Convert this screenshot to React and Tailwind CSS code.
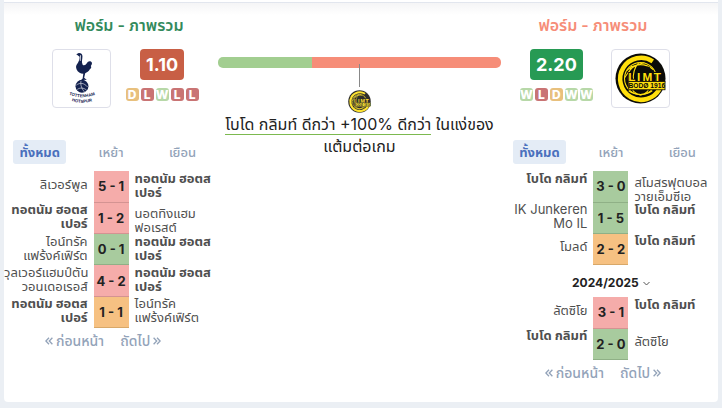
const FORM_COLORS = {
  W: "bg-[#b7d8a8]",
  D: "bg-[#e8c07d]",
  L: "bg-[#c97474]",
};

const SCORE_COLORS = {
  W: "bg-[#a8cb9e] border-[#8fb086]",
  D: "bg-[#f6c182] border-[#d8a869]",
  L: "bg-[#f5acaa] border-[#d49392]",
};

const SPURS = { lines: ["ทอตนัม ฮอตส", "เปอร์"], bold: true };
const GLIMT = { lines: ["โบโด กลิมท์"], bold: true };

const HOME = {
  title: "ฟอร์ม - ภาพรวม",
  points: "1.10",
  form: ["D", "L", "W", "L", "L"],
  matches: [
    [{ lines: ["ลิเวอร์พูล"] }, "5 - 1", "L", SPURS],
    [SPURS, "1 - 2", "L", { lines: ["นอตทิงแฮม", "ฟอเรสต์"], low: true }],
    [{ lines: ["ไอน์ทรัค", "แฟร้งค์เฟิร์ต"] }, "0 - 1", "W", SPURS],
    [{ lines: ["วุลเวอร์แฮมป์ตัน", "วอนเดอเรอส์"] }, "4 - 2", "L", SPURS],
    [SPURS, "1 - 1", "D", { lines: ["ไอน์ทรัค", "แฟร้งค์เฟิร์ต"] }],
  ],
};

const AWAY = {
  title: "ฟอร์ม - ภาพรวม",
  points: "2.20",
  form: ["W", "L", "D", "W", "W"],
  matches: [
    [GLIMT, "3 - 0", "W", { lines: ["สโมสรฟุตบอล", "วายเอ็มซีเอ"], low: true }],
    [{ lines: ["IK Junkeren", "Mo IL"] }, "1 - 5", "W", GLIMT],
    [{ lines: ["โมลด์"] }, "2 - 2", "D", GLIMT],
  ],
  previous: [
    [{ lines: ["ลัตซิโย"] }, "3 - 1", "L", GLIMT],
    [GLIMT, "2 - 0", "W", { lines: ["ลัตซิโย"] }],
  ],
};

function SpursLogo() {
  return (
    <svg viewBox="0 0 60 60" className="size-full" role="img" aria-label="Tottenham Hotspur">
      <g fill="#14224f">
        <path d="M24.500 4.600l2.600-1.400c2.200-.2 3.700 1 3.900 3 .1 3.200-1.300 5.800.2 9.200 1.500 1.500 3.200.4 4.400-1.400 1-1.700 2.600-2.700 4.600-1.600 1.300 1 1 2.900-.4 4.400.9 1.300.4 2.600-1 3.500-1.200 2.400-3.200 3.400-4.900 4.200l-1.100 4.600 2.800 2.500-3-.4-1.900 1.700-2-.2 2.500-2.700.7-4.900c-3.200-.3-5.900-2.100-7-4.700-1.100-2.500-.7-4.300.7-6 1.400-2 2.500-4.300 2.400-7.300z" />
        <circle cx="30.500" cy="38.200" r="6.800" />
      </g>
      <path d="M29 5.500l-.3 6" fill="none" stroke="#fff" strokeWidth=".8" />
      <path d="M24.500 37c4-3 8-2.500 12 2M25.500 41.500c3-2 7-2 10 1M29.500 32.500c-1 4 1 9 4 12" fill="none" stroke="#fff" strokeWidth=".6" />
      <path id="spurs-top" d="M12 45Q30.500 54.500 49 45" fill="none" />
      <path id="spurs-bottom" d="M12 50.500Q30.500 60.500 49 50.500" fill="none" />
      <g fill="#14224f" fontFamily="Liberation Sans, sans-serif" fontWeight="700" textAnchor="middle">
        <text fontSize="4.500"><textPath href="#spurs-top" startOffset="50%">TOTTENHAM</textPath></text>
        <text fontSize="4.500"><textPath href="#spurs-bottom" startOffset="50%">HOTSPUR</textPath></text>
      </g>
    </svg>
  );
}

function GlimtLogo() {
  return (
    <svg viewBox="0 0 52 52" className="size-full" role="img" aria-label="Bodø/Glimt">
      <circle cx="26" cy="26" r="25.500" fill="#0b0b08" />
      <path d="M38.500 8.500A21.400 21.400 0 1 0 45.500 36.500" fill="none" stroke="#ffdf0c" strokeWidth="4.600" />
      <g fill="none" stroke="#ffdf0c" strokeWidth="1.100">
        <circle cx="26" cy="26" r="16.300" />
        <path d="M12 18C20 10 31 10 39 17M10 25c5-9 11-14 20-15M17 13c-4 8-4 14-2 25M24 10c-5 6-6 12-5 18M14 38.500c7 5 17 5 24 0M18 38c2 3 5 4 8 5M34 38c-2 3-4 4-8 5" />
      </g>
      <circle cx="33" cy="17" r="3.200" fill="#0b0b08" />
      <text x="13.500 22.500 28 39.500" y="28.500" fill="#ffdf0c" stroke="#0b0b08" strokeWidth="2" paintOrder="stroke" fontFamily="Liberation Sans, sans-serif" fontWeight="700" fontSize="12">
        LIMT
      </text>
      <rect x="14" y="29" width="37" height="8.500" fill="#ffdf0c" stroke="#0b0b08" strokeWidth=".8" />
      <text x="32.500" y="35.700" fill="#0b0b08" fontFamily="Liberation Sans, sans-serif" fontWeight="700" fontSize="6.800" textAnchor="middle">BODØ 1916</text>
    </svg>
  );
}

function DoubleAngle({ flip }) {
  return (
    <svg viewBox="0 0 8 8" className={`size-2 ${flip ? "rotate-180" : ""}`} fill="none" stroke="currentColor" strokeWidth="1.300" aria-hidden="true">
      <path d="M4 .8L.9 4 4 7.200M7.400.8L4.300 4l3.100 3.200" />
    </svg>
  );
}

function Crest({ children, pad }) {
  return <div className={`size-[59px] shrink-0 rounded-[4px] border border-[#dedfe9] ${pad}`}>{children}</div>;
}

function FormBlock({ points, form, color }) {
  return (
    <div className="flex flex-col items-center gap-2">
      <div className={`flex h-[31px] items-center rounded-[4px] px-1.5 text-[18px] font-bold text-white ${color}`}>{points}</div>
      <div className="flex gap-0.5">
        {form.map((r, i) => (
          <span key={i} className={`flex size-[13px] items-center justify-center rounded-[3px] text-[12px] font-extrabold text-white ${FORM_COLORS[r]}`}>
            {r}
          </span>
        ))}
      </div>
    </div>
  );
}

function Tabs() {
  return (
    <div className="grid grid-cols-3 text-[13px] font-medium text-[#93a3b9]">
      {["ทั้งหมด", "เหย้า", "เยือน"].map((label, i) => (
        <button
          key={label}
          type="button"
          className={`h-6 justify-self-center rounded-[3px] px-1.5 leading-6 ${i === 0 ? "bg-[#e4ecf6] font-bold text-[#4a70bd]" : ""}`}
        >
          {label}
        </button>
      ))}
    </div>
  );
}

function Team({ team, align }) {
  const single = !team.bold && team.lines.length === 1;
  return (
    <td className={`p-0 align-top ${team.bold ? "font-bold" : ""} ${align}`}>
      <div className={`h-[30px] ${single ? "pt-1.5" : ""} ${team.low ? "pt-1" : ""}`}>
        {team.lines.map((line) => (
          <span key={line} className="block whitespace-nowrap">{line}</span>
        ))}
      </div>
    </td>
  );
}

function Matches({ rows, height }) {
  return (
    <table className={`w-full table-fixed border-collapse text-[13px] leading-[14px] text-[#4f4f4f] ${height}`}>
      <colgroup>
        <col />
        <col className="w-[35px]" />
        <col />
      </colgroup>
      <tbody>
        {rows.map(([left, score, result, right], i) => (
          <tr key={i} className="h-[31px]">
            <Team team={left} align="pr-1.5 text-right" />
            <td className={`border-b p-0 text-center font-bold text-[#222] ${SCORE_COLORS[result]}`}>{score}</td>
            <Team team={right} align="pl-1.5 text-left" />
          </tr>
        ))}
      </tbody>
    </table>
  );
}

function Pager() {
  return (
    <div className="mt-[5px] flex justify-center gap-4 pr-4 text-[14px] leading-4 font-medium text-[#93a3b9]">
      <button type="button" className="flex items-center gap-[3px]"><DoubleAngle />ก่อนหน้า</button>
      <button type="button" className="flex items-center gap-[3px]">ถัดไป<DoubleAngle flip /></button>
    </div>
  );
}

export default function App() {
  return (
    <div className="min-h-screen bg-[#ebeff4] px-1 pb-1.5 font-[Inter,'Noto_Sans_Thai','Noto_Sans',sans-serif]">
      <div className="h-[3px] border-b border-[#e2e6ee] bg-white" />
      <main className="grid min-h-[399px] grid-cols-[3fr_4fr_3fr] rounded-b-[4px] bg-white bg-linear-to-b from-[#f5f5f6] to-white to-[12px]">
        <section>
          <div className="pt-3 pl-9">
            <h2 className="text-center text-[16px] leading-5 font-semibold text-[#338a5c]">{HOME.title}</h2>
            <div className="mt-3.5 flex justify-center gap-[15px] pr-2">
              <Crest pad="p-0"><SpursLogo /></Crest>
              <FormBlock points={HOME.points} form={HOME.form} color="bg-[#c85f45]" />
            </div>
          </div>
          <div className="mt-8"><Tabs /></div>
          <div className="mt-[7px]"><Matches rows={HOME.matches} height="h-[157px]" /></div>
          <Pager />
        </section>

        <section className="pt-[54px] pr-[3px] text-center">
          <div className="flex h-[11px] overflow-hidden rounded-[5px]">
            <div className="w-1/3 bg-[#a2ce90]" />
            <div className="flex-1 bg-[#f68d78]" />
          </div>
          <div className="relative mx-auto -mt-1 h-[23px] w-px bg-[#888]" />
          <div className="mx-auto mt-[3px] size-[23px] opacity-85"><GlimtLogo /></div>
          <p className="text-[16px] leading-[22px] text-[#222]">
            <span className="border-b border-[#7cb94f]">โบโด กลิมท์ ดีกว่า +100% ดีกว่า</span> ในแง่ของ
            <br />
            แต้มต่อเกม
          </p>
        </section>

        <section>
          <div className="pt-3 pr-9">
            <h2 className="text-center text-[16px] leading-5 font-semibold text-[#f68d78]">{AWAY.title}</h2>
            <div className="mt-3.5 flex justify-center gap-[18px] pl-1">
              <FormBlock points={AWAY.points} form={AWAY.form} color="bg-[#279a54]" />
              <Crest pad="p-[3px]"><GlimtLogo /></Crest>
            </div>
          </div>
          <div className="mt-8"><Tabs /></div>
          <div className="mt-[7px]"><Matches rows={AWAY.matches} height="h-[94px]" /></div>
          <button type="button" className="mx-auto mt-2.5 mb-1.5 flex items-center gap-1 text-[12px] leading-4 font-bold text-[#222]">
            2024/2025
            <svg viewBox="0 0 7 5" className="h-[5px] w-[7px]" fill="none" stroke="#555" strokeWidth="1" aria-hidden="true">
              <path d="M.5 1l3 3 3-3" />
            </svg>
          </button>
          <Matches rows={AWAY.previous} height="h-[62px]" />
          <Pager />
        </section>
      </main>
    </div>
  );
}
